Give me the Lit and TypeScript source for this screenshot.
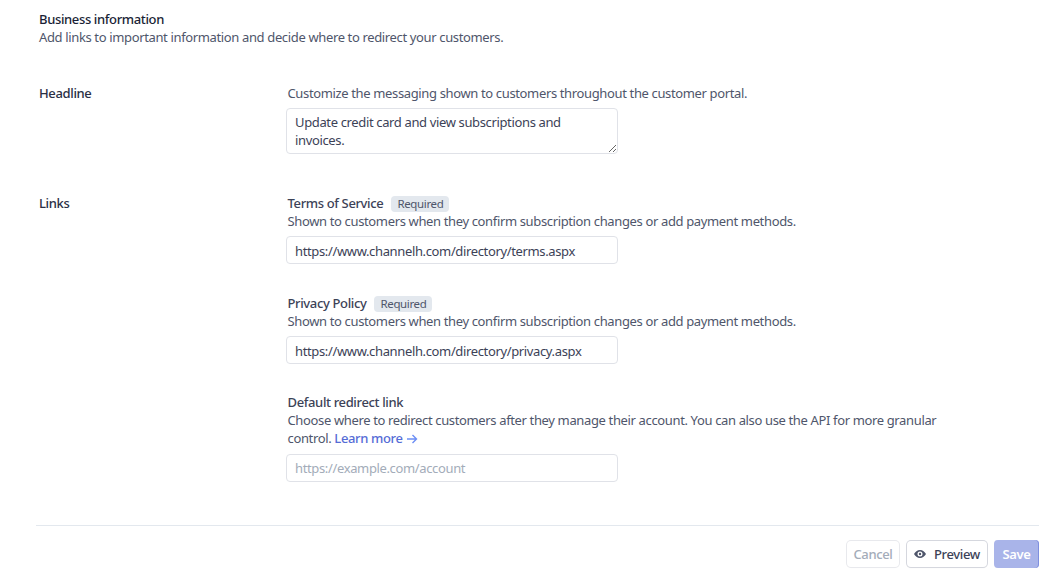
import { LitElement, html, css } from "lit";
import { customElement } from "lit/decorators.js";

@customElement("app-root")
export class AppRoot extends LitElement {
  static styles = css`
    :host { display: block; width: 1053px; height: 585px; background: #fff; overflow: hidden;
      font-family: "Noto Sans", "Open Sans", sans-serif; font-size: 13px; letter-spacing: -0.36px; line-height: 18px; color: #4f566b; }
    .page { padding: 10px 14px 0 36px; display: flex; flex-direction: column; }
    .intro { padding-left: 3px; }
    .title { font-weight: 500; color: #1a1f36; }
    .section { display: grid; grid-template-columns: 248px 1fr; padding-left: 3px; }
    .headline { margin-top: 38px; }
    .links { margin-top: 40px; }
    .label { font-weight: 500; color: #2a2f45; }
    .stack { display: flex; flex-direction: column; min-width: 0; padding-right: 90px; padding-left: 0.5px; }
    .field + .field { margin-top: 30px; }
    .field-last { margin-top: 29px !important; }
    .name { display: flex; align-items: center; gap: 8px; font-weight: 500; color: #3c4257; }
    .badge { font-size: 11.5px; line-height: 16px; padding: 0 6px; background: #e3e8ee; border-radius: 4px; color: #4f566b; font-weight: 400; margin-top: 1px; }
    input, textarea { display: block; box-sizing: border-box; width: 332px; margin: 6px 0 0 -1.5px; padding: 1px 8px 0;
      border: 1px solid #e0e2e8; border-radius: 4px; font: inherit; letter-spacing: inherit; color: #3c4257; background: #fff; outline: none; }
    input { height: 28px; }
    .field-last input { margin-top: 7px; padding-top: 0; }
    textarea { height: 46px; padding: 4px 8px; resize: vertical; }
    input::placeholder { color: #a3acb9; opacity: 1; }
    a { color: #556cd6; font-weight: 500; text-decoration: none; }
    a svg { display: inline-block; vertical-align: -1.5px; margin-left: 3px; }
    hr { border: 0; border-top: 1px solid #e3e8ee; margin: 43px 0 0; }
    .actions { display: flex; justify-content: flex-end; align-items: center; margin-top: 14px; }
    button { box-sizing: border-box; height: 26px; border: 0; border-radius: 4px; font: inherit; letter-spacing: inherit; font-weight: 500; padding: 0; display: inline-flex; align-items: center; justify-content: center; background: #fff; }
    .cancel { width: 52px; margin-right: 8px; color: #a3acb9; box-shadow: 0 0 0 1px #e8e9ed, 0 1px 1px rgba(0,0,0,.04); }
    .preview { width: 80px; margin-right: 7px; gap: 8px; color: #3c4257; box-shadow: 0 0 0 1px #d5d7de, 0 1px 1px rgba(0,0,0,.1); }
    .save { width: 45px; height: 28px; color: #fff; font-weight: 600; background: #a9b4e9; box-shadow: inset -1px 0 0 #7f8fdf; }
  `;

  render() {
    const terms = "Shown to customers when they confirm subscription changes or add payment methods.";
    return html`
      <div class="page">
        <div class="intro">
          <div class="title">Business information</div>
          <div>Add links to important information and decide where to redirect your customers.</div>
        </div>
        <div class="section headline">
          <div class="label">Headline</div>
          <div class="stack">
            <div>Customize the messaging shown to customers throughout the customer portal.</div>
            <textarea .value=${"Update credit card and view subscriptions and invoices."}></textarea>
          </div>
        </div>
        <div class="section links">
          <div class="label">Links</div>
          <div class="stack">
            <div class="field">
              <div class="name">Terms of Service <span class="badge">Required</span></div>
              <div>${terms}</div>
              <input .value=${"https://www.channelh.com/directory/terms.aspx"} />
            </div>
            <div class="field">
              <div class="name">Privacy Policy <span class="badge">Required</span></div>
              <div>${terms}</div>
              <input .value=${"https://www.channelh.com/directory/privacy.aspx"} />
            </div>
            <div class="field field-last">
              <div class="name">Default redirect link</div>
              <div>Choose where to redirect customers after they manage their account. You can also use the API for more granular control. <a href="#">Learn more<svg width="12" height="12" viewBox="0 0 12 12" fill="none" stroke="#6c8ef5" stroke-width="1.4"><path d="M1 6h9.500M6.500 2l4 4-4 4"/></svg></a></div>
              <input placeholder="https://example.com/account" />
            </div>
          </div>
        </div>
        <hr />
        <div class="actions">
          <button class="cancel">Cancel</button>
          <button class="preview">
            <svg width="12" height="12" viewBox="0 0 12 12" fill="#4f566b"><path fill-rule="evenodd" d="M6 2C3.300 2 1.200 3.700 0 6c1.200 2.300 3.300 4 6 4s4.800-1.700 6-4c-1.200-2.300-3.300-4-6-4zm0 1.500a2.500 2.500 0 1 1 0 5 2.500 2.500 0 0 1 0-5z"/><circle cx="6" cy="6" r="1.200"/></svg>
            Preview</button>
          <button class="save">Save</button>
        </div>
      </div>
    `;
  }
}
